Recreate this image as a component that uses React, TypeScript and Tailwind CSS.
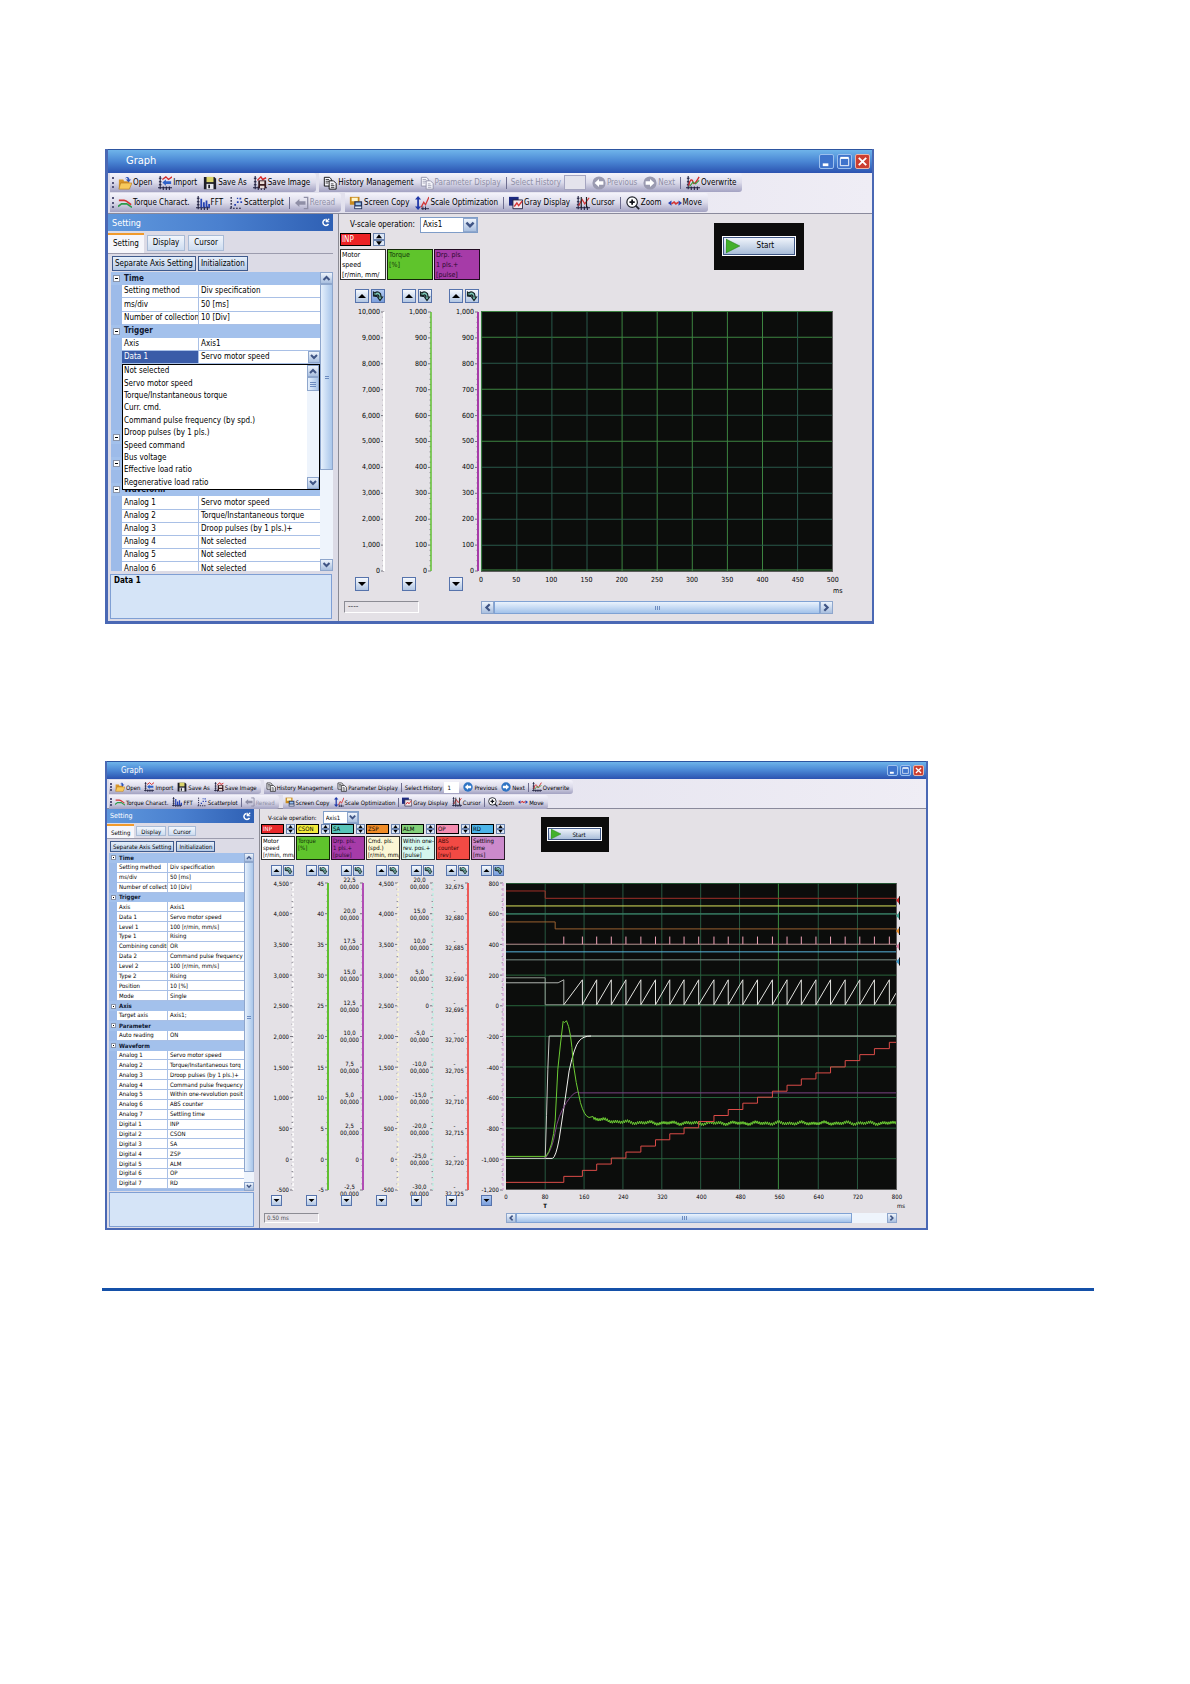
import React from "react";

type Size = "lg" | "sm";

/* ---------- size-dependent class names ---------- */

const styles = {
  lg: {
    text: "text-[8px] leading-[12px]",
    axisText: "text-[7px] leading-[8px]",
    title: "h-6 pl-[18px] text-[11px]",
    titleButtons: "gap-[3px] pr-[2px]",
    titleButton: "size-[15px]",
    bars: "h-[41px] gap-px",
    bar: "h-[19px] pl-px pr-[3px]",
    barButton: "px-[3px]",
    icon: "size-[14px]",
    historyInput: "w-[22px] h-[15px] mx-[3px]",
    separator: "h-3 mx-[2px]",
    side: "w-[231px] pr-[5px]",
    sideHeader: "h-[17px] pl-1 text-[9px]",
    tabs: "h-[22px] pt-[2px] gap-[3px]",
    tab: "px-[5px]",
    actions: "h-[19px] gap-[2px] pl-[4px] pt-[2px]",
    action: "h-[15px] px-[2px]",
    tree: "h-[299px] ml-[3px]",
    table: "h-[304px]",
    row: "h-[13px]",
    gutter: "w-[11px]",
    name: "w-[77px]",
    expander: "size-[7px]",
    vbar: "w-[13px]",
    vbarButton: "h-[12px]",
    vthumb: "h-[186px]",
    desc: "h-[45px] mt-[3px] ml-[2px] mb-[2px] mr-px px-[3px]",
    main: "pr-[39px]",
    scaleRow: "h-[19px] pt-[2px] pl-[10px] gap-[5px]",
    select: "w-[58px] h-[16px] pl-[2px]",
    column: "w-[47px]",
    digital: "h-[13px]",
    digitalName: "w-[31px]",
    spinner: "w-[12px]",
    head: "h-[31px] mt-[3px] leading-[10px] text-[7px]",
    startBox: "ml-[233px] mt-[9px] h-[47px] w-[90px] pt-[13px] pl-[8px]",
    startButton: "h-[20px] w-[74px] text-[8px]",
    stepRow: "mt-[9px] h-[14px] gap-[2px] pr-[2px]",
    step: "size-[14px]",
    axis: "mt-[9px] h-[259px]",
    downRow: "mt-[6px] h-[14px] pr-[18px]",
    chartTop: "mt-[31px]",
    chart: "h-[261px]",
    xRow: "h-[11px] pt-[4px]",
    unitRow: "h-[12px]",
    footer: "mt-[6px] h-[13px]",
    status: "w-[75px] ml-[4px] pl-[3px] h-[12px]",
    hbarButton: "w-[13px]",
  },
  sm: {
    text: "text-[6px] leading-[9px]",
    axisText: "text-[6px] leading-[7px]",
    title: "h-[18px] pl-[14px] text-[8px]",
    titleButtons: "gap-[2px] pr-[2px]",
    titleButton: "size-[11px]",
    bars: "h-[30px] gap-px pt-px",
    bar: "h-[14px] pr-[2px]",
    barButton: "px-[2px]",
    icon: "size-[10px]",
    historyInput: "w-[15px] h-[11px] mx-[2px]",
    separator: "h-[9px] mx-px",
    side: "w-[153px] pr-[5px]",
    sideHeader: "h-[14px] pl-[3px] text-[7px]",
    tabs: "h-[15px] pt-px gap-[2px]",
    tab: "px-1",
    actions: "h-[15px] gap-[2px] pl-[3px] pt-[2px]",
    action: "h-[11px] px-[2px]",
    tree: "h-[338px] ml-[2px]",
    table: "h-[336px]",
    row: "h-[9px]",
    gutter: "w-[8px]",
    name: "w-[51px]",
    expander: "size-[5px]",
    vbar: "w-[10px]",
    vbarButton: "h-[9px]",
    vthumb: "h-[310px]",
    desc: "h-[35px] mt-px ml-[2px] mb-px px-[3px]",
    main: "pr-[29px]",
    scaleRow: "h-[15px] pt-[2px] pl-[7px] gap-[6px]",
    select: "w-[36px] h-[13px] pl-[2px]",
    column: "w-[35px]",
    digital: "h-[10px]",
    digitalName: "w-[23px]",
    spinner: "w-[9px]",
    head: "h-[24px] mt-[2px] leading-[7px] text-[6px]",
    startBox: "ml-[35px] mt-[8px] h-[35px] w-[68px] pt-[10px] pl-[6px]",
    startButton: "h-[14px] w-[55px] text-[6px]",
    stepRow: "mt-[5px] h-[11px] gap-px pr-[2px]",
    step: "size-[11px]",
    axis: "mt-[7px] h-[307px]",
    downRow: "mt-[5px] h-[11px] pr-[14px]",
    chartTop: "mt-[23px]",
    chart: "h-[307px]",
    xRow: "h-[10px] pt-[3px]",
    unitRow: "h-[9px]",
    footer: "mt-[4px] h-[10px]",
    status: "w-[55px] ml-[3px] pl-[2px] h-[10px]",
    hbarButton: "w-[10px]",
  },
} as const;

/* ---------- icons ---------- */

const plotAxes = <path d="M2.5 0v15M1 2.5h3M0 13.5h16M1 6.5h3M1 10h3M6 12v4M9.500 12v4M13 12v4" stroke="#1d1d3c" strokeWidth="1.2" />;

const icons: Record<string, React.ReactNode> = {
  open: (
    <>
      <path d="M1 4h5l1 2h6v8H1z" fill="#d8962a" />
      <path d="M3 8h13l-3 7H1z" fill="#f7c95c" stroke="#a86a14" strokeWidth=".6" />
      <path d="M8 3c2-3 5-2 5 1h2l-3 3-3-3h2c0-2-2-2-3-1" fill="#2c52b8" />
    </>
  ),
  import: (
    <>
      {plotAxes}
      <path d="M5 4l4-3 3 3 4-3" stroke="#d42a2a" strokeWidth="1.5" />
      <path d="M15 6H9V4L5 7.500 9 11V9h6z" fill="#2f62c8" />
    </>
  ),
  save: (
    <>
      <path d="M1 1h12l2 2v12H1z" fill="#1e1e28" />
      <path d="M4 1h8v6H4z" fill="#d9d36a" />
      <path d="M4 9h8v6H4z" fill="#e8e8ee" />
      <path d="M6 10h2v4H6z" fill="#1e1e28" />
    </>
  ),
  saveImage: (
    <>
      {plotAxes}
      <path d="M5 5l4-4 2 3 4-2" stroke="#d42a2a" strokeWidth="1.6" />
      <path d="M6 5h9v9H6z" fill="#3a1c20" />
      <path d="M8 6h5v3H8zM8 11h5v3H8z" fill="#e8dcd8" />
    </>
  ),
  pages: (
    <>
      <path d="M1.500 1.500h6l2 2v8h-8z" fill="#f6f6fb" stroke="currentColor" />
      <path d="M3 4h4M3 6h4M3 8h3" stroke="currentColor" strokeWidth=".8" />
      <path d="M7 5.500h5l3 3v6.500H7z" fill="#f6f6fb" stroke="currentColor" />
      <path d="M9 9h3M9 11h4M9 13h4" stroke="currentColor" strokeWidth=".8" />
    </>
  ),
  previous: (
    <>
      <circle cx="8" cy="8" r="7.500" fill="currentColor" />
      <path d="M8 3.500L3 8l5 4.500V10h5V6H8z" fill="#fff" />
    </>
  ),
  next: (
    <>
      <circle cx="8" cy="8" r="7.500" fill="currentColor" />
      <path d="M8 3.500L13 8l-5 4.500V10H3V6h5z" fill="#fff" />
    </>
  ),
  overwrite: (
    <>
      {plotAxes}
      <path d="M3 11c2-8 4-8 5-4s3 1 7-6" stroke="#d42a2a" strokeWidth="1.5" />
      <path d="M4 12l4-5 3 2 4-4" stroke="#3a9a3a" strokeWidth="1.300" />
    </>
  ),
  torque: (
    <>
      <path d="M1 5h6c3 0 5 3 8 5" stroke="#d43434" strokeWidth="1.800" />
      <path d="M0 12l4-3h6l6 4" stroke="#2c9a4c" strokeWidth="1.800" />
    </>
  ),
  fft: (
    <>
      {plotAxes}
      <path d="M5 3h2v10H5zM8 7h2v6H8zM11 5h2v8h-2zM14 9h2v4h-2z" fill="#2643b4" />
    </>
  ),
  scatter: (
    <>
      <path d="M2.500 1v14M1 14h14" stroke="#1d1d3c" strokeDasharray="2 1.500" strokeWidth="1.400" />
      <path d="M6 9h2v2H6zM9 6h2v2H9zM12 2h2v2h-2zM13 6h2v2h-2zM9 2h1.500v1.500H9z" fill="#2643b4" />
    </>
  ),
  reread: (
    <>
      <path d="M10 1.500h4.500v13H10" stroke="currentColor" strokeWidth="1.500" />
      <path d="M12 6H5V3.500L0 8l5 4.500V10h7z" fill="currentColor" />
    </>
  ),
  screenCopy: (
    <>
      <path d="M1 1h11v9H1z" fill="#c98b1e" />
      <path d="M3 2h7v4H3z" fill="#fff6c8" />
      <path d="M6 6h9v9H6z" fill="#24345e" />
      <path d="M7.500 7.500h6v3h-6z" fill="#9cc4ee" />
      <path d="M7 12h7v2H7z" fill="#e8eef8" />
    </>
  ),
  scale: (
    <>
      <path d="M3.500 0L7 4H4.500v8H7l-3.500 4L0 12h2.500V4H0z" fill="#2038a8" />
      <path d="M7 13l3-6 2 3 4-9" stroke="#d43434" strokeWidth="1.400" />
      <path d="M7 14.500h9M9 12v4M12 12v4" stroke="#1d1d3c" />
    </>
  ),
  gray: (
    <>
      <path d="M0 1h11v10H0z" fill="#1d2a80" />
      <path d="M4.500 4.500h11v10h-11z" fill="#f2e8ec" stroke="#1d1d3c" />
      <path d="M6 12l3-4 2 3 4-5" stroke="#d43434" strokeWidth="1.500" />
    </>
  ),
  cursor: (
    <>
      {plotAxes}
      <path d="M3 11l4-7 3 5 5-7" stroke="#d43434" strokeWidth="1.400" />
      <path d="M6 1v12M12 1v12" stroke="#1d1d1d" strokeWidth="1.300" />
    </>
  ),
  zoom: (
    <>
      <circle cx="7" cy="7" r="6" fill="#fff" stroke="#20242c" strokeWidth="1.400" />
      <path d="M4 7h6M7 4v6" stroke="#10131a" strokeWidth="2" />
      <path d="M11 11l4 4" stroke="#20242c" strokeWidth="2" />
    </>
  ),
  move: (
    <>
      <path d="M0 8l4-3v6zM16 8l-4-3v6z" fill="#2643b4" />
      <path d="M4 9l3-2 2 2 3-2" stroke="#d43434" strokeWidth="1.800" />
    </>
  ),
};

function Icon({ name, className }: { name: string; className: string }) {
  return (
    <svg viewBox="0 0 16 16" fill="none" aria-hidden="true" className={`shrink-0 ${className}`}>
      {icons[name]}
    </svg>
  );
}

type Dir = "up" | "down" | "left" | "right";
const chevrons: Record<Dir, string> = {
  up: "M2 7l3-3 3 3",
  down: "M2 3l3 3 3-3",
  left: "M7 2L4 5l3 3",
  right: "M3 2l3 3-3 3",
};

function Chevron({ dir }: { dir: Dir }) {
  return (
    <svg viewBox="0 0 10 10" fill="none" stroke="#3f5484" strokeWidth="2" className="size-full" aria-hidden="true">
      <path d={chevrons[dir]} />
    </svg>
  );
}

const glossy = "border border-[#8ea6cc] bg-linear-to-b from-[#eef4fc] to-[#a9bfdf]";

/* ---------- toolbars ---------- */

type Item = { icon?: string; label?: string; off?: boolean; sep?: boolean; history?: boolean; tone?: string };

function Toolbar({ size, items, grip, historyValue }: { size: Size; items: Item[]; grip?: boolean; historyValue: string }) {
  const s = styles[size];
  return (
    <div className={`flex items-center rounded-r-[3px] bg-linear-to-b from-[#f4f3fb] via-[#dcdbea] to-[#a3a2c2] ${s.bar}`}>
      {grip && <span className="mx-px h-3/5 border-l-2 border-dotted border-[#55557a]" />}
      {items.map((it, i) => {
        if (it.sep) return <span key={i} className={`border-l border-[#6d6d90] ${s.separator}`} />;
        if (it.history)
          return (
            <label key={i} className={`flex items-center pl-[2px] whitespace-nowrap ${it.off ? "text-[#8f8fa6]" : "text-black"}`}>
              {it.label}
              <input
                defaultValue={historyValue}
                className={`border px-[2px] ${it.off ? "border-[#a5a5c0] bg-[#e4e3ec]" : "border-white bg-white"} ${s.historyInput}`}
              />
            </label>
          );
        return (
          <button
            key={i}
            type="button"
            disabled={it.off}
            className={`flex items-center gap-px whitespace-nowrap ${it.off ? "text-[#8f8fa6]" : "text-black"} ${s.barButton}`}
          >
            <span className={it.tone}>
              <Icon name={it.icon!} className={s.icon} />
            </span>
            {it.label}
          </button>
        );
      })}
    </div>
  );
}

function Toolbars({ size, historyOff, historyValue }: { size: Size; historyOff: boolean; historyValue: string }) {
  const s = styles[size];
  const arrowTone = historyOff ? "text-[#9a9ab0]" : "text-[#2f74c4]";
  return (
    <div className={`flex flex-col border-b border-[#8a8a9c] bg-linear-to-r from-[#dddcea] to-[#efedf5] pl-[2px] ${s.bars} ${s.text}`}>
      <div className="flex gap-[3px]">
        <Toolbar
          size={size}
          grip
          historyValue=""
          items={[
            { icon: "open", label: "Open" },
            { icon: "import", label: "Import" },
            { icon: "save", label: "Save As" },
            { icon: "saveImage", label: "Save Image" },
          ]}
        />
        <Toolbar
          size={size}
          historyValue={historyValue}
          items={[
            { icon: "pages", label: "History Management" },
            { icon: "pages", label: "Parameter Display", off: historyOff },
            { sep: true },
            { history: true, label: "Select History", off: historyOff },
            { icon: "previous", label: "Previous", off: historyOff, tone: arrowTone },
            { icon: "next", label: "Next", off: historyOff, tone: arrowTone },
            { sep: true },
            { icon: "overwrite", label: "Overwrite" },
          ]}
        />
      </div>
      <div className="flex gap-[4px]">
        <Toolbar
          size={size}
          grip
          historyValue=""
          items={[
            { icon: "torque", label: "Torque Charact." },
            { icon: "fft", label: "FFT" },
            { icon: "scatter", label: "Scatterplot" },
            { sep: true },
            { icon: "reread", label: "Reread", off: true },
          ]}
        />
        <Toolbar
          size={size}
          historyValue=""
          items={[
            { icon: "screenCopy", label: "Screen Copy" },
            { icon: "scale", label: "Scale Optimization" },
            { sep: true },
            { icon: "gray", label: "Gray Display" },
            { icon: "cursor", label: "Cursor" },
            { sep: true },
            { icon: "zoom", label: "Zoom" },
            { icon: "move", label: "Move" },
          ]}
        />
      </div>
    </div>
  );
}

/* ---------- settings panel ---------- */

type Row = { group: string } | { name: string; value: string; selected?: boolean };

function SettingPanel({
  size,
  rows,
  description,
  options,
}: {
  size: Size;
  rows: Row[];
  description: string;
  options?: string[];
}) {
  const s = styles[size];
  return (
    <aside className={`flex shrink-0 flex-col border-r border-[#8a8a94] bg-[#dcdbe6] ${s.side} ${s.text}`}>
      <h2 className={`flex items-center justify-between bg-linear-to-r from-[#5f97dc] via-[#4a80cf] to-[#2f60b4] pr-[3px] text-white ${s.sideHeader}`}>
        Setting
        <svg viewBox="0 0 12 12" fill="none" stroke="#fff" strokeWidth="2" className="size-[9px]" aria-hidden="true">
          <path d="M6 2a4 4 0 1 0 4 6" />
          <path d="M7 5l4-4M7 1v4h4" strokeWidth="1.500" />
        </svg>
      </h2>
      <div className={`flex items-stretch ${s.tabs}`}>
        <button type="button" className={`border-t-2 border-[#f09a2c] bg-[#f6f6fb] ${s.tab}`}>
          Setting
        </button>
        <button type="button" className={`my-[2px] flex items-center border border-[#a9bbd6] bg-linear-to-b from-[#f2f6fc] to-[#cddcf0] ${s.tab}`}>
          Display
        </button>
        <button type="button" className={`my-[2px] flex items-center border border-[#a9bbd6] bg-linear-to-b from-[#f2f6fc] to-[#cddcf0] ${s.tab}`}>
          Cursor
        </button>
      </div>
      <div className={`flex items-start border-t border-[#9c9cae] ${s.actions}`}>
        <button type="button" className={`flex items-center whitespace-nowrap border border-[#3f5a8c] bg-linear-to-b from-[#e6effa] to-[#b4c9e6] ${s.action}`}>
          Separate Axis Setting
        </button>
        <button type="button" className={`flex items-center whitespace-nowrap border border-[#3f5a8c] bg-linear-to-b from-[#e6effa] to-[#b4c9e6] ${s.action}`}>
          Initialization
        </button>
      </div>
      <div className={`relative flex items-start overflow-hidden bg-[#9dbbe9] ${s.tree}`}>
        <div className="min-w-0 flex-1">
          <table className={`w-full table-fixed border-separate border-spacing-0 ${s.table}`}>
            <colgroup>
              <col className={s.gutter} />
              <col className={s.name} />
              <col />
            </colgroup>
            <tbody>
              {rows.map((row, i) =>
                "group" in row ? (
                  <tr key={i} className={`bg-[#a3c1ec] ${s.row}`}>
                    <td className="p-0">
                      <button
                        type="button"
                        aria-label="Collapse group"
                        className={`mx-auto flex items-center border border-[#8a94a8] bg-white ${s.expander}`}
                      >
                        <span className="mx-px h-px w-full bg-black" />
                      </button>
                    </td>
                    <th colSpan={2} scope="rowgroup" className="p-0 pl-[2px] text-left leading-none font-bold text-[#101830]">
                      {row.group}
                    </th>
                  </tr>
                ) : (
                  <tr key={i} className={s.row}>
                    <td className="p-0" />
                    <th
                      scope="row"
                      className={`overflow-hidden border-r border-b border-[#a9c0e6] p-0 pl-[2px] text-left leading-none font-normal whitespace-nowrap ${
                        row.selected ? "bg-[#3a5ca8] text-white" : "bg-white text-black"
                      }`}
                    >
                      {row.name}
                    </th>
                    <td className="overflow-hidden border-b border-[#a9c0e6] bg-white p-0 pl-[2px] leading-none whitespace-nowrap">
                      {row.selected ? (
                        <span className="flex items-center justify-between">
                          {row.value}
                          <button type="button" aria-label={`Choose ${row.name}`} className={`size-[12px] ${glossy}`}>
                            <Chevron dir="down" />
                          </button>
                        </span>
                      ) : (
                        row.value
                      )}
                    </td>
                  </tr>
                ),
              )}
            </tbody>
          </table>
        </div>
        <div className={`flex flex-col self-stretch bg-[#eef4fc] ${s.vbar}`}>
          <button type="button" aria-label="Scroll up" className={`shrink-0 ${glossy} ${s.vbarButton}`}>
            <Chevron dir="up" />
          </button>
          <div className={`flex flex-col items-center justify-center gap-px border border-[#8ea6cc] bg-linear-to-r from-[#e6f0fc] to-[#a9c6ea] ${s.vthumb}`}>
            <span className="h-px w-1 bg-[#6d8cc0]" />
            <span className="h-px w-1 bg-[#6d8cc0]" />
          </div>
          <button type="button" aria-label="Scroll down" className={`mt-auto shrink-0 ${glossy} ${s.vbarButton}`}>
            <Chevron dir="down" />
          </button>
        </div>
        {options && (
          <div className="absolute top-[92px] right-[13px] left-[11px] flex h-[126px] border border-black bg-white">
            <ul className="flex flex-1 flex-col">
              {options.map((o) => (
                <li key={o} className="flex flex-1 items-center pl-px whitespace-nowrap">
                  {o}
                </li>
              ))}
            </ul>
            <div className="flex w-[12px] flex-col bg-[#eef4fc]">
              <button type="button" aria-label="Scroll list up" className={`h-[12px] ${glossy}`}>
                <Chevron dir="up" />
              </button>
              <div className="flex h-[14px] flex-col items-center justify-center gap-px border border-[#8ea6cc] bg-linear-to-r from-[#e6f0fc] to-[#a9c6ea]">
                <span className="h-px w-[6px] bg-[#6d8cc0]" />
                <span className="h-px w-[6px] bg-[#6d8cc0]" />
                <span className="h-px w-[6px] bg-[#6d8cc0]" />
              </div>
              <button type="button" aria-label="Scroll list down" className={`mt-auto h-[12px] ${glossy}`}>
                <Chevron dir="down" />
              </button>
            </div>
          </div>
        )}
      </div>
      <div className={`border border-[#7f9fd4] bg-[#d5e4f7] font-bold ${s.desc}`}>{description}</div>
    </aside>
  );
}

/* ---------- axes ---------- */

type Axis = {
  digital?: { name: string; tone: string };
  title: string[];
  tone: string;
  line: string;
  width: number;
  labels: string[][];
  active?: boolean;
};

function StepButton({ size, kind, active }: { size: Size; kind: "up" | "down" | "reset"; active?: boolean }) {
  const s = styles[size];
  return (
    <button
      type="button"
      aria-label={kind === "up" ? "Shift up" : kind === "down" ? "Shift down" : "Reset shift"}
      className={`border border-[#5673ac] bg-linear-to-b ${active ? "from-[#b4ccf2] to-[#7b9fdc]" : "from-[#f6f9fd] to-[#b2c6e2]"} ${s.step}`}
    >
      <svg viewBox="0 0 12 12" className="size-full" fill="none" aria-hidden="true">
        {kind === "up" && <path d="M2 8l4-4 4 4z" fill="#000" />}
        {kind === "down" && <path d="M2 4l4 4 4-4z" fill="#000" />}
        {kind === "reset" && (
          <>
            <path d="M1.500 6V2l1.500 1c2-2 6-1 6 3v1h1.500L8 10.500 5.500 7H7c0-2-1.500-2.500-2.500-1.500L5 6.500z" fill="#7cc8b8" stroke="#162424" strokeWidth="1.200" />
            <path d="M2 5l3 1" stroke="#162424" strokeWidth="1.500" />
          </>
        )}
      </svg>
    </button>
  );
}

function AxisColumn({ size, axis }: { size: Size; axis: Axis }) {
  const s = styles[size];
  const ticks = Array.from({ length: 51 }, (_, i) => i);
  return (
    <div className={`flex flex-col items-end ${s.column}`}>
      <div className={`flex ${s.stepRow}`}>
        <StepButton size={size} kind="up" />
        <StepButton size={size} kind="reset" active={axis.active} />
      </div>
      <div className={`flex w-full justify-end pr-[2px] ${s.axis}`}>
        <div className={`flex flex-1 flex-col justify-between text-right ${s.axisText}`}>
          {axis.labels.map((lines, i) => (
            <span key={i} className="flex h-0 items-center justify-end">
              <span className="text-center">
                {lines.map((l, j) => (
                  <span key={j} className="block">
                    {l}
                  </span>
                ))}
              </span>
            </span>
          ))}
        </div>
        <svg viewBox="0 0 5 500" preserveAspectRatio="none" className="h-full w-[5px] shrink-0 overflow-visible" aria-hidden="true">
          {ticks.map((t) => (
            <path
              key={t}
              d={t % 5 === 0 ? `M1 ${t * 10}h3` : `M2.500 ${t * 10}h1.500`}
              stroke={t % 5 === 0 ? "#77757e" : "#8d8b94"}
              strokeWidth="1"
              vectorEffect="non-scaling-stroke"
            />
          ))}
          <path
            d="M4 0v500"
            stroke={axis.line}
            strokeWidth={axis.width}
            vectorEffect="non-scaling-stroke"
            strokeDasharray={axis.width < 2 && size === "sm" ? "3 2" : undefined}
          />
        </svg>
      </div>
      <div className={`flex ${s.downRow}`}>
        <StepButton size={size} kind="down" active={axis.active && size === "sm"} />
      </div>
    </div>
  );
}

/* ---------- window ---------- */

type Graph = {
  size: Size;
  axes: Axis[];
  xLabels: string[];
  trigger?: boolean;
  status: string;
  plot: React.ReactNode;
  thumb: string;
  markers?: React.ReactNode;
};

function GraphArea({ size, axes, xLabels, trigger, status, plot, thumb, markers }: Graph) {
  const s = styles[size];
  return (
    <main className={`min-w-0 flex-1 bg-[#e4e1e6] pl-px ${s.main} ${s.text}`}>
      <div className="flex items-start">
        <div className="shrink-0">
          <div className={`flex ${size === "lg" ? "w-[141px]" : "w-[245px]"}`}>
            <label className={`flex items-center whitespace-nowrap ${s.scaleRow}`}>
              V-scale operation:
              <span className={`relative flex shrink-0 border border-[#7f9dc8] bg-white ${s.select}`}>
                <select className="w-full appearance-none bg-white">
                  <option>Axis1</option>
                </select>
                <span className={`pointer-events-none absolute inset-y-0 right-0 aspect-square ${glossy}`}>
                  <Chevron dir="down" />
                </span>
              </span>
            </label>
          </div>
          <div className="flex">
            {axes.map((a, i) => (
              <div key={i} className={s.column}>
                <div className={`flex gap-[2px] ${s.digital}`}>
                  {a.digital && (
                    <>
                      <span className={`flex items-center border border-black pl-px leading-none ${a.digital.tone} ${s.digitalName}`}>{a.digital.name}</span>
                      <span className={`flex flex-col ${s.spinner}`}>
                        <button type="button" aria-label="Previous signal" className="flex-1 border border-[#6a82ac] bg-[#dbe6f6]">
                          <svg viewBox="0 0 10 4" className="size-full" aria-hidden="true">
                            <path d="M2 4l3-4 3 4z" />
                          </svg>
                        </button>
                        <button type="button" aria-label="Next signal" className="flex-1 border border-[#6a82ac] bg-[#dbe6f6]">
                          <svg viewBox="0 0 10 4" className="size-full" aria-hidden="true">
                            <path d="M2 0l3 4 3-4z" />
                          </svg>
                        </button>
                      </span>
                    </>
                  )}
                </div>
                <div className={`mr-px overflow-hidden border border-black/80 pl-px whitespace-nowrap ${a.tone} ${s.head}`}>
                  {a.title.map((t) => (
                    <span key={t} className="block">
                      {t}
                    </span>
                  ))}
                </div>
              </div>
            ))}
          </div>
        </div>
        <div className={`shrink-0 bg-[#0c0c0c] ${s.startBox}`}>
          <button
            type="button"
            className={`flex items-center border border-white bg-linear-to-b from-[#f4f8fd] to-[#a4b9d6] pl-[3px] outline outline-offset-[-2px] outline-[#3e5684] ${s.startButton}`}
          >
            <svg viewBox="0 0 12 12" className="h-full w-1/5" aria-hidden="true">
              <path d="M0 0l12 6-12 6z" fill="#43b02c" stroke="#2c7c20" strokeWidth=".5" />
            </svg>
            <span className="flex-1 pr-[4px] text-center">Start</span>
          </button>
        </div>
      </div>
      <div className="flex">
        {axes.map((a, i) => (
          <AxisColumn key={i} size={size} axis={a} />
        ))}
        <div className={`min-w-0 flex-1 ${s.chartTop}`}>
          <div className={`relative border-r border-b border-[#5c5c5c] bg-[#0c0d0c] ${s.chart}`}>
            {plot}
            {markers}
          </div>
          <div className={`flex justify-between ${s.axisText} ${s.xRow}`}>
            {xLabels.map((x) => (
              <span key={x} className="flex w-0 justify-center">
                {x}
              </span>
            ))}
          </div>
          <div className={`flex items-end justify-between ${s.axisText} ${s.unitRow}`}>
            <span className="flex w-1/5 justify-center font-bold">{trigger ? "T" : ""}</span>
            <span className="flex w-0 pl-px">ms</span>
          </div>
        </div>
      </div>
      <div className={`flex ${s.footer}`}>
        <div className="flex shrink-0">
          {axes.map((_, i) => (
            <span key={i} className={`${s.column} ${i === 0 ? "" : "pointer-events-none"}`}>
              {i === 0 && (
                <output className={`flex items-center border border-t-[#8c8c94] border-r-white border-b-white border-l-[#8c8c94] leading-none whitespace-nowrap text-[#4a4a50] ${s.status}`}>
                  {status}
                </output>
              )}
            </span>
          ))}
        </div>
        <div className="flex min-w-0 flex-1 bg-[#eef4fc]">
          <button type="button" aria-label="Scroll left" className={`${glossy} ${s.hbarButton}`}>
            <Chevron dir="left" />
          </button>
          <div className={`flex items-center justify-center gap-px border border-[#7fa2d4] bg-linear-to-b from-[#eaf3fd] to-[#a3c2ea] ${thumb}`}>
            <span className="h-[4px] w-px bg-[#6d8cc0]" />
            <span className="h-[4px] w-px bg-[#6d8cc0]" />
            <span className="h-[4px] w-px bg-[#6d8cc0]" />
          </div>
          <button type="button" aria-label="Scroll right" className={`ml-auto ${glossy} ${s.hbarButton}`}>
            <Chevron dir="right" />
          </button>
        </div>
      </div>
    </main>
  );
}

function TitleBar({ size }: { size: Size }) {
  const s = styles[size];
  return (
    <header className={`flex items-center justify-between border-t border-[#2d55a0] bg-linear-to-b from-[#6fb4ea] via-[#4a86d4] to-[#2c52b0] text-white ${s.title}`}>
      <h1>Graph</h1>
      <div className={`flex ${s.titleButtons}`}>
        <button type="button" aria-label="Minimize" className={`rounded-[2px] border border-[#9cc0ee] bg-[#3f74cc] ${s.titleButton}`}>
          <svg viewBox="0 0 14 14" className="size-full" aria-hidden="true">
            <path d="M3 9h6v3H3z" fill="#fff" />
          </svg>
        </button>
        <button type="button" aria-label="Maximize" className={`rounded-[2px] border border-[#9cc0ee] bg-[#3f74cc] ${s.titleButton}`}>
          <svg viewBox="0 0 14 14" className="size-full" fill="none" stroke="#fff" aria-hidden="true">
            <path d="M2.500 3.500h9v8h-9z" />
            <path d="M2.500 3h9" strokeWidth="2" />
          </svg>
        </button>
        <button type="button" aria-label="Close" className={`rounded-[2px] border border-[#e8b4a8] bg-[#cc3e30] ${s.titleButton}`}>
          <svg viewBox="0 0 14 14" className="size-full" fill="none" stroke="#fff" strokeWidth="2" aria-hidden="true">
            <path d="M3 3l8 8M11 3l-8 8" />
          </svg>
        </button>
      </div>
    </header>
  );
}

/* ---------- data ---------- */

const range = (from: number, step: number, n = 11) => Array.from({ length: n }, (_, i) => [(from + i * step).toLocaleString("en-US")]);
const long = (heads: string[]) => heads.map((h) => (h === "0" ? ["0"] : [h, "00,000"]));

const axesTop: Axis[] = [
  {
    digital: { name: "INP", tone: "bg-[#ec2224] text-white" },
    title: ["Motor", "speed", "[r/min, mm/"],
    tone: "bg-white text-black",
    line: "#ffffff",
    width: 2,
    labels: range(10000, -1000),
    active: true,
  },
  { title: ["Torque", "[%]"], tone: "bg-[#5fc42c] text-[#14340a]", line: "#5fbf30", width: 1.5, labels: range(1000, -100) },
  { title: ["Drp. pls.", "1 pls.+", "[pulse]"], tone: "bg-[#a63ba8] text-[#2a0a2c]", line: "#a63ba8", width: 2, labels: range(1000, -100) },
];

const axesBottom: Axis[] = [
  { digital: { name: "INP", tone: "bg-[#e8282a] text-white" }, title: ["Motor", "speed", "[r/min, mm/"], tone: "bg-white text-black", line: "#ffffff", width: 1.5, labels: range(4500, -500) },
  { digital: { name: "CSON", tone: "bg-[#f2ea3c] text-black" }, title: ["Torque", "[%]"], tone: "bg-[#5fc42c] text-[#14340a]", line: "#5fbf30", width: 2, labels: range(45, -5) },
  {
    digital: { name: "SA", tone: "bg-[#58c4b8] text-black" },
    title: ["Drp. pls.", "1 pls.+", "[pulse]"],
    tone: "bg-[#a63ba8] text-[#2a0a2c]",
    line: "#b04cb4",
    width: 2,
    labels: long(["22,5", "20,0", "17,5", "15,0", "12,5", "10,0", "7,5", "5,0", "2,5", "0", "-2,5"]),
  },
  { digital: { name: "ZSP", tone: "bg-[#f08c28] text-black" }, title: ["Cmd. pls.", "(spd.)", "[r/min, mm/"], tone: "bg-[#fbf6d4] text-black", line: "#fbf6d4", width: 1.5, labels: range(4500, -500) },
  {
    digital: { name: "ALM", tone: "bg-[#84d07a] text-black" },
    title: ["Within one-", "rev. pos.+", "[pulse]"],
    tone: "bg-[#d4f6ee] text-black",
    line: "#bfeee4",
    width: 1.5,
    labels: long(["20,0", "15,0", "10,0", "5,0", "0", "-5,0", "-10,0", "-15,0", "-20,0", "-25,0", "-30,0"]),
  },
  {
    digital: { name: "OP", tone: "bg-[#f48cb0] text-black" },
    title: ["ABS", "counter", "[rev]"],
    tone: "bg-[#f24a44] text-[#3a0808]",
    line: "#ec5a58",
    width: 2,
    labels: range(32675, 5).map(([v]) => ["-", v]),
  },
  { digital: { name: "RD", tone: "bg-[#4cb4e8] text-black" }, title: ["Settling", "time", "[ms]"], tone: "bg-[#cc8acc] text-black", line: "#d8a8dc", width: 1.5, labels: range(800, -200), active: true },
];

const rowsTop: Row[] = [
  { group: "Time" },
  { name: "Setting method", value: "Div specification" },
  { name: "ms/div", value: "50 [ms]" },
  { name: "Number of collection", value: "10 [Div]" },
  { group: "Trigger" },
  { name: "Axis", value: "Axis1" },
  { name: "Data 1", value: "Servo motor speed", selected: true },
  { name: "", value: "" },
  { name: "", value: "" },
  { name: "", value: "" },
  { name: "", value: "" },
  { name: "", value: "" },
  { group: "" },
  { name: "", value: "" },
  { group: "" },
  { name: "", value: "" },
  { group: "Waveform" },
  { name: "Analog 1", value: "Servo motor speed" },
  { name: "Analog 2", value: "Torque/Instantaneous torque" },
  { name: "Analog 3", value: "Droop pulses (by 1 pls.)+" },
  { name: "Analog 4", value: "Not selected" },
  { name: "Analog 5", value: "Not selected" },
  { name: "Analog 6", value: "Not selected" },
];

const rowsBottom: Row[] = [
  { group: "Time" },
  { name: "Setting method", value: "Div specification" },
  { name: "ms/div", value: "50 [ms]" },
  { name: "Number of collect", value: "10 [Div]" },
  { group: "Trigger" },
  { name: "Axis", value: "Axis1" },
  { name: "Data 1", value: "Servo motor speed" },
  { name: "Level 1", value: "100 [r/min, mm/s]" },
  { name: "Type 1", value: "Rising" },
  { name: "Combining conditi", value: "OR" },
  { name: "Data 2", value: "Command pulse frequency" },
  { name: "Level 2", value: "100 [r/min, mm/s]" },
  { name: "Type 2", value: "Rising" },
  { name: "Position", value: "10 [%]" },
  { name: "Mode", value: "Single" },
  { group: "Axis" },
  { name: "Target axis", value: "Axis1;" },
  { group: "Parameter" },
  { name: "Auto reading", value: "ON" },
  { group: "Waveform" },
  { name: "Analog 1", value: "Servo motor speed" },
  { name: "Analog 2", value: "Torque/Instantaneous torq" },
  { name: "Analog 3", value: "Droop pulses (by 1 pls.)+" },
  { name: "Analog 4", value: "Command pulse frequency" },
  { name: "Analog 5", value: "Within one-revolution posit" },
  { name: "Analog 6", value: "ABS counter" },
  { name: "Analog 7", value: "Settling time" },
  { name: "Digital 1", value: "INP" },
  { name: "Digital 2", value: "CSON" },
  { name: "Digital 3", value: "SA" },
  { name: "Digital 4", value: "ZSP" },
  { name: "Digital 5", value: "ALM" },
  { name: "Digital 6", value: "OP" },
  { name: "Digital 7", value: "RD" },
];

const triggerOptions = [
  "Not selected",
  "Servo motor speed",
  "Torque/Instantaneous torque",
  "Curr. cmd.",
  "Command pulse frequency (by spd.)",
  "Droop pulses (by 1 pls.)",
  "Speed command",
  "Bus voltage",
  "Effective load ratio",
  "Regenerative load ratio",
];

/* ---------- plots ---------- */

const brightX = [4, 5, 6, 7, 8];
const brightY = [1, 3, 5];

function EmptyPlot() {
  return (
    <svg viewBox="0 0 1000 1000" preserveAspectRatio="none" fill="none" className="size-full" aria-label="Empty graph">
      {Array.from({ length: 10 }, (_, i) => (
        <g key={i} strokeWidth="1">
          <path d={`M0 ${i * 100 + 1}h1000`} stroke={brightY.includes(i) ? "#3c8440" : "#28584a"} vectorEffect="non-scaling-stroke" />
          <path d={`M${i * 100 + 2} 0v1000`} stroke={brightX.includes(i) ? "#3c8440" : "#28584a"} vectorEffect="non-scaling-stroke" />
        </g>
      ))}
      <path d="M1 1000V2h999M0 996h1000" stroke="#3c8440" vectorEffect="non-scaling-stroke" />
    </svg>
  );
}

/* Horizontal positions at which the encoder passes one revolution. */
const turns = [174, 230, 273, 317, 361, 406, 450, 493, 536, 580, 626, 669, 713, 757, 802, 846, 889, 933, 977, 1021, 1065, 1109, 1154];
const saw = turns.map((x, i) => (i < turns.length - 1 ? `M${x} 366L${turns[i + 1]} 291V366` : `M${x} 366L1174 331`)).join("");
const stairs = "M0 900H174" + turns.map((x, i) => `V${Math.round(882 - i * 18.3)}H${turns[i + 1] ?? 1174}`).join("");
const pulses = turns.map((x) => `M${x} 184V161`).join("");
const noise = Array.from({ length: 300 }, (_, i) => {
  const x = 262 + i * 3.05;
  const base = 722 - 16 * Math.exp(-(x - 262) / 60);
  return `L${x.toFixed(1)} ${(base + 4 * Math.sin(i * 0.42) * Math.sin(i * 0.13) + (i % 2 ? 4 : -4)).toFixed(1)}`;
}).join("");

const traces: [string, string, number][] = [
  ["M0 24H118V46H1174", "#a03028", 1],
  ["M0 69H1174", "#dce45c", 1],
  ["M0 93H1174", "#3f8a78", 1],
  ["M0 117H148V138H1174", "#9a6030", 1],
  ["M0 184H1174", "#b07480", 1],
  [pulses, "#f0a4b8", 1],
  ["M0 207H1174", "#58b4dc", 1],
  ["M0 231H1174", "#7c9088", 1],
  ["M0 285H118V366H1174", "#8c948c", 1],
  ["M0 300H157L174 291V366", "#b0b4b0", 1],
  [saw, "#e4e4e0", 1],
  ["M0 828H118L122 700L126 560L130 460H1174", "#c8c8c4", 1],
  ["M118 828H140Q150 824 160 770L178 650L190 565Q206 490 220 475Q232 460 256 460", "#f0f0ec", 1],
  ["M118 828Q140 800 148 750T182 660T222 631H1174", "#7c4484", 1],
  ["M0 822H120Q140 800 148 715L156 560Q164 480 172 416L176 420L182 414Q196 440 202 540Q210 600 224 660Q236 702 250 705" + noise, "#6ccc34", 1],
  [stairs, "#dc4c48", 1],
];

const markerTones = ["#c82828", "#3fa090", "#e08828", "#d880a0", "#3c94c4"];

function RecordedPlot() {
  const xs = [118, 235, 352, 469, 586, 703, 820, 940, 1058];
  return (
    <svg viewBox="0 0 1174 920" preserveAspectRatio="none" fill="none" className="size-full" aria-label="Recorded waveforms">
      {xs.map((x) => (
        <path key={x} d={`M${x} 0V920`} stroke={x === 820 ? "#3c8c40" : "#285840"} vectorEffect="non-scaling-stroke" />
      ))}
      {Array.from({ length: 10 }, (_, i) => (
        <path key={i} d={`M0 ${i * 92 + 1}H1174`} stroke="#28643c" vectorEffect="non-scaling-stroke" />
      ))}
      {traces.map(([d, stroke, w], i) => (
        <path key={i} d={d} stroke={stroke} strokeWidth={w} vectorEffect="non-scaling-stroke" />
      ))}
    </svg>
  );
}

function Markers() {
  return (
    <svg viewBox="0 0 4 300" preserveAspectRatio="none" className="absolute top-0 left-full h-full w-1" aria-hidden="true">
      {markerTones.map((c, i) => (
        <g key={c}>
          <path d={`M0 ${17 + i * 15}l3-3v6z`} fill={c} />
          <path d={`M3 ${13 + i * 15}h1v8h-1z`} fill="#111" />
        </g>
      ))}
    </svg>
  );
}

export default function App() {
  return (
    <div className="min-h-screen bg-white pt-[149px] pr-24 pb-20 pl-[102px] text-black [font-family:'DejaVu_Sans_Condensed','DejaVu_Sans',sans-serif]">
      <section className="ml-[3px] w-full max-w-[769px] border-r-2 border-b-3 border-l-3 border-[#4a68b4]">
        <TitleBar size="lg" />
        <Toolbars size="lg" historyOff historyValue="" />
        <div className="flex">
          <SettingPanel size="lg" rows={rowsTop} description="Data 1" options={triggerOptions} />
          <GraphArea
            size="lg"
            axes={axesTop}
            xLabels={["0", "50", "100", "150", "200", "250", "300", "350", "400", "450", "500"]}
            status="----"
            plot={<EmptyPlot />}
            thumb="flex-1"
          />
        </div>
      </section>

      <section className="mt-[137px] ml-[3px] w-full max-w-[823px] border-r-2 border-b-2 border-l-2 border-[#4a68b4]">
        <TitleBar size="sm" />
        <Toolbars size="sm" historyOff={false} historyValue="1" />
        <div className="flex">
          <SettingPanel size="sm" rows={rowsBottom} description="" />
          <GraphArea
            size="sm"
            axes={axesBottom}
            xLabels={["0", "80", "160", "240", "320", "400", "480", "560", "640", "720", "800"]}
            trigger
            status="0.50 ms"
            plot={<RecordedPlot />}
            thumb="w-[86%]"
            markers={<Markers />}
          />
        </div>
      </section>

      <hr className="mt-[58px] h-[3px] border-0 bg-[#1450a8]" />
    </div>
  );
}
